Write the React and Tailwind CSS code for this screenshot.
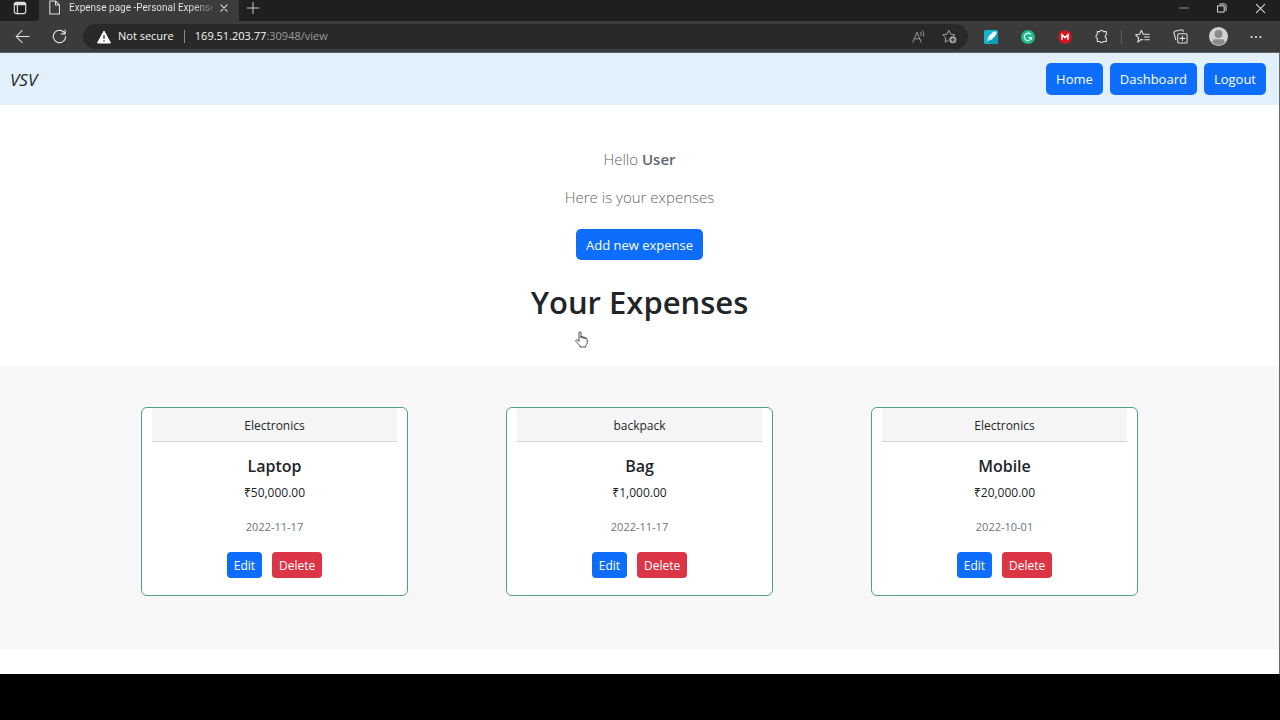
import React from "react";

const expenses = [
  { category: "Electronics", name: "Laptop", price: "₹50,000.00", date: "2022-11-17" },
  { category: "backpack", name: "Bag", price: "₹1,000.00", date: "2022-11-17" },
  { category: "Electronics", name: "Mobile", price: "₹20,000.00", date: "2022-10-01" },
];

function Icon({ size = 16, children, className = "" }) {
  return (
    <svg
      width={size}
      height={size}
      viewBox="0 0 16 16"
      fill="none"
      stroke="currentColor"
      strokeWidth="1"
      strokeLinecap="round"
      strokeLinejoin="round"
      className={className}
      aria-hidden="true"
    >
      {children}
    </svg>
  );
}

function ToolButton({ label, wide, children }) {
  return (
    <button
      type="button"
      aria-label={label}
      className={
        (wide ? "w-[38px]" : "w-[37px]") +
        " flex h-6 shrink-0 items-center justify-center text-[#e4e4e4]"
      }
    >
      {children}
    </button>
  );
}

function TabStrip() {
  return (
    <div className="flex h-[21px] items-start bg-[#1f1f1f] text-[#dedede]">
      <div className="h-[21px] w-[39px] shrink-0 bg-[#3b3b3b]">
        <button
          type="button"
          aria-label="Tab actions"
          className="flex h-full w-full items-start justify-center rounded-br-[4px] bg-[#1f1f1f] pt-px"
        >
          <Icon size={14}>
            <path
              d="M4 1.500h8A2.500 2.500 0 0 1 14.500 4v8A2.500 2.500 0 0 1 12 14.500H4A2.500 2.500 0 0 1 1.500 12V4A2.500 2.500 0 0 1 4 1.500z"
              strokeWidth="1.300"
            />
            <path d="M2 3.500h12" strokeWidth="2.600" />
            <path d="M5 5v9" strokeWidth="1.300" />
          </Icon>
        </button>
      </div>
      <div className="flex h-[21px] w-[200px] shrink-0 items-start bg-[#3b3b3b] pr-2 pl-2">
        <Icon size={15} className="shrink-0">
          <path d="M3 1h6l4.300 4.300V15H3zM9 1v4.300h4.300" strokeWidth="1.100" />
        </Icon>
        <span className="ml-[7px] h-4 w-[143px] bg-linear-to-r from-[#ececec] from-85% to-[#6e6e6e] bg-clip-text font-[Roboto,sans-serif] text-[10px] leading-[15px] whitespace-nowrap text-transparent">
          Expense page -Personal Expense
        </span>
        <button
          type="button"
          aria-label="Close tab"
          className="ml-1 flex h-4 flex-1 items-center justify-center"
        >
          <Icon size={10}>
            <path d="M3 3l10 10M13 3L3 13" strokeWidth="1.700" />
          </Icon>
        </button>
      </div>
      <button
        type="button"
        aria-label="New tab"
        className="flex h-4 w-7 items-center justify-center"
      >
        <Icon size={14}>
          <path d="M8 1.500v13M1.500 8h13" />
        </Icon>
      </button>
      <div className="mr-px ml-auto flex">
        <button type="button" aria-label="Minimize" className="flex h-4 w-[38px] items-center justify-center">
          <Icon size={10}>
            <path d="M1 8h14" />
          </Icon>
        </button>
        <button type="button" aria-label="Restore" className="flex h-4 w-[38px] items-center justify-center">
          <Icon size={10}>
            <path d="M1.500 4.500h10v10h-10z" strokeWidth="1.600" />
            <path d="M4.500 1.500H12a2.500 2.500 0 0 1 2.500 2.500v8" strokeWidth="1.600" />
          </Icon>
        </button>
        <button type="button" aria-label="Close window" className="flex h-4 w-[38px] items-center justify-center">
          <Icon size={11}>
            <path d="M2 2l12 12M14 2L2 14" strokeWidth="1.500" />
          </Icon>
        </button>
      </div>
    </div>
  );
}

function AddressBar() {
  return (
    <div className="flex h-[25px] min-w-0 flex-1 items-center rounded-full bg-[#292929] pr-1 pl-[14px] text-[11px] text-[#f5f5f5]">
      <svg width="14" height="14" viewBox="0 0 14 14" className="shrink-0" aria-hidden="true">
        <path d="M7 1L13.500 13H.5z" fill="#fff" stroke="#fff" strokeLinejoin="round" />
        <path d="M7 5v4M7 10.300v1.300" stroke="#292929" strokeWidth="1.300" />
      </svg>
      <span className="ml-[7px]">Not secure</span>
      <span className="mx-[10px] h-[13px] w-px bg-[#8a8a8a]" />
      <span className="text-[#9a9a9a]">
        <span className="text-[#f5f5f5]">169.51.203.77</span>:30948/view
      </span>
      <div className="ml-auto flex items-center text-[#a5a5a5]">
        <button type="button" aria-label="Read aloud" className="flex w-[30px] justify-center">
          <Icon size={14}>
            <path d="M1 14L5.700 2.500L10.500 14M2.700 10h6.200" />
            <path d="M9.500 2.500a4 4 0 0 1 1 4M12 1a6.500 6.500 0 0 1 1.500 6" />
          </Icon>
        </button>
        <button type="button" aria-label="Add to favorites" className="flex w-[30px] justify-center">
          <Icon size={15}>
            <path d="M6.500 12.200L3.300 14l.7-4.600L.8 6.200l4.500-.7L7.300 1.400l2 4.100 4.500.7-2 1.500" />
            <circle cx="11.500" cy="11.500" r="3.800" fill="currentColor" stroke="none" />
            <path d="M11.500 9.700v3.600M9.700 11.500h3.600" stroke="#292929" />
          </Icon>
        </button>
      </div>
    </div>
  );
}

function Toolbar() {
  return (
    <div className="flex h-8 items-center border-b border-[#5f6163] bg-[#3b3b3b] pr-[5px] pl-1">
      <ToolButton label="Back">
        <Icon size={15}>
          <path d="M15 8H1.200M7.500 1.700L1.200 8l6.300 6.300" strokeWidth="1.100" />
        </Icon>
      </ToolButton>
      <ToolButton label="Refresh">
        <Icon size={15}>
          <path d="M14 5.200A6.600 6.600 0 1 0 14.600 8M14 1.200v4h-4" strokeWidth="1.200" />
        </Icon>
      </ToolButton>
      <div className="w-[5px]" />
      <AddressBar />
      <div className="w-1" />
      <ToolButton label="Pen extension">
        <svg width="14" height="14" viewBox="0 0 14 14" aria-hidden="true">
          <rect width="14" height="14" rx="1.500" fill="#12b5cb" />
          <path d="M12 1L14 3V12.500A1.500 1.500 0 0 1 12.500 14H5.500L3.500 11.500z" fill="#0a9fb5" />
          <path d="M3 12L4.200 7L9.200 1.800Q12 .8 12.600 2.200Q12.800 4 11.500 5.500L7.800 9.600L4.600 10.800z" fill="#fff" />
          <path d="M3.300 11.600l3-3.500" stroke="#12b5cb" strokeWidth=".7" />
        </svg>
      </ToolButton>
      <ToolButton label="Writing extension">
        <svg width="14" height="14" viewBox="0 0 14 14" aria-hidden="true">
          <circle cx="7" cy="7" r="7" fill="#1abc8c" />
          <path d="M9.800 4.400A3.700 3.700 0 1 0 8.500 10.400M7.500 7.500H10.500V10M10.500 7.500L8.500 9.500" fill="none" stroke="#fff" strokeWidth="1.100" />
        </svg>
      </ToolButton>
      <ToolButton label="Cloud extension">
        <svg width="14" height="14" viewBox="0 0 14 14" aria-hidden="true">
          <circle cx="7" cy="7" r="6.700" fill="#d9151f" />
          <path d="M4 9.800V4.800L7 7.600L10 4.800V9.800" fill="none" stroke="#fff" strokeWidth="1.500" />
        </svg>
      </ToolButton>
      <ToolButton label="Extensions">
        <Icon size={15}>
          <path
            d="M3.500 2.800h2.700a1.900 1.900 0 0 1 3.700 0h3.300v3.400a1.800 1.800 0 0 0 0 3.500v3.600H9.900a1.900 1.900 0 0 1-3.700 0H3.500V9.800a1.900 1.900 0 0 1 0-3.700z"
            strokeWidth="1.100"
          />
        </Icon>
      </ToolButton>
      <div className="mx-px h-[14px] w-px bg-[#5c5c5c]" />
      <ToolButton label="Favorites" wide>
        <Icon size={15}>
          <path d="M8.500 11.500L6.500 11.200L3 14l.8-4.600L.7 6.200l4.200-.7L6.800 1.500l2 4h6.400M10 8.500h5.200M10.500 11.500h4.700" strokeWidth="1.100" />
        </Icon>
      </ToolButton>
      <ToolButton label="Collections" wide>
        <Icon size={15}>
          <rect x="5" y="5" width="10" height="10" rx="1.500" strokeWidth="1.100" />
          <path d="M10 7.500v5M7.500 10h5M3 11.500L1 4a1.500 1.500 0 0 1 1-1.700L9 .8a1.400 1.400 0 0 1 1.700 1V3" strokeWidth="1.100" />
        </Icon>
      </ToolButton>
      <ToolButton label="Profile" wide>
        <svg width="19" height="19" viewBox="0 0 19 19" aria-hidden="true">
          <circle cx="9.500" cy="9.500" r="9.500" fill="#d2d0ce" />
          <circle cx="9.500" cy="7" r="3.900" fill="#8b8885" />
          <path d="M3.200 15.500Q3.500 12.300 6 12.300H13Q15.500 12.300 15.800 15.500A9 9 0 0 1 3.200 15.500z" fill="#8b8885" />
        </svg>
      </ToolButton>
      <ToolButton label="Settings and more" wide>
        <Icon size={14}>
          <g fill="currentColor" stroke="none">
            <circle cx="3" cy="8" r="1.200" />
            <circle cx="8" cy="8" r="1.200" />
            <circle cx="13" cy="8" r="1.200" />
          </g>
        </Icon>
      </ToolButton>
    </div>
  );
}

function NavBar() {
  return (
    <nav className="flex h-[52px] items-center gap-[7px] bg-[#e2f0fb] pr-[13px] pl-[10px] text-[13px]">
      <span className="mr-auto pt-0.5 text-[17px] text-[#212529] italic">VSV</span>
      {["Home", "Dashboard", "Logout"].map((label) => (
        <a
          key={label}
          href="#"
          className="flex h-8 items-center rounded-[5px] bg-[#0d6efd] px-[10px] pt-0.5 text-white"
        >
          {label}
        </a>
      ))}
    </nav>
  );
}

function ExpenseCard({ expense }) {
  return (
    <article className="flex flex-col items-center rounded-[6px] border border-[#4fa083] bg-white px-[10px] pb-[17px] text-[12px] text-[#212529]">
      <div className="h-[34px] w-full border-b border-[#d4d4d4] bg-[#f5f5f5] text-center leading-9">
        {expense.category}
      </div>
      <h2 className="mt-[13px] text-[16px] leading-[22px] font-semibold">{expense.name}</h2>
      <p className="mt-[5px] leading-[22px]">{expense.price}</p>
      <p className="mt-3 text-[11px] leading-[22px] text-[#6c757d]">{expense.date}</p>
      <div className="mt-[14px] flex gap-[10px]">
        <button type="button" className="h-[26px] rounded-[4px] bg-[#0d6efd] px-[7px] pt-0.5 text-white">
          Edit
        </button>
        <button type="button" className="h-[26px] rounded-[4px] bg-[#dc3545] px-[7px] pt-0.5 text-white">
          Delete
        </button>
      </div>
    </article>
  );
}

function HandCursor() {
  return (
    <svg
      width="13"
      height="17"
      viewBox="0 0 13 17"
      className="absolute top-[331px] left-[calc(50%-65px)]"
      aria-hidden="true"
    >
      <path
        d="M4 10.500V2Q4 .8 5 .8T6 2V7V5.500Q8 4.800 8 6.200V7.500V6.200Q10 5.600 10 7V8V7Q12.200 6.600 12.200 8.500V11.500Q12 13.500 10.800 14.500V16H5V14.800L1 10.500Q.3 9.200 1.500 8.800T4 10.500z"
        fill="#fff"
        stroke="#3c3c46"
        strokeWidth=".9"
        strokeLinejoin="round"
      />
    </svg>
  );
}

export default function App() {
  return (
    <div className="relative min-h-screen bg-black font-['Open_Sans','Noto_Sans',sans-serif]">
      <header>
        <TabStrip />
        <Toolbar />
      </header>
      <div className="border-r border-[#6b6b6b] bg-white">
        <NavBar />
        <main>
          <section className="flex flex-col items-center px-4 pt-[42px] pb-[42px] text-center">
            <p className="text-[15px] leading-6 font-light text-[#5f676e]">
              Hello <span className="font-semibold">User</span>
            </p>
            <p className="mt-[14px] text-[15px] leading-6 font-light text-[#5f676e]">
              Here is your expenses
            </p>
            <button
              type="button"
              className="mt-5 h-[31px] rounded-[5px] bg-[#0d6efd] px-[10px] pt-0.5 text-[13px] text-white"
            >
              Add new expense
            </button>
            <h1 className="mt-5 text-[31px] leading-[44px] font-semibold text-[#212529]">
              Your Expenses
            </h1>
          </section>
          <section className="bg-[#f7f7fa] px-4 pt-[41px] pb-[53px]">
            <div className="mx-auto grid max-w-[997px] grid-cols-3 gap-[98px]">
              {expenses.map((expense) => (
                <ExpenseCard key={expense.name} expense={expense} />
              ))}
            </div>
          </section>
          <div className="h-[25px] bg-white" />
        </main>
      </div>
      <HandCursor />
    </div>
  );
}
